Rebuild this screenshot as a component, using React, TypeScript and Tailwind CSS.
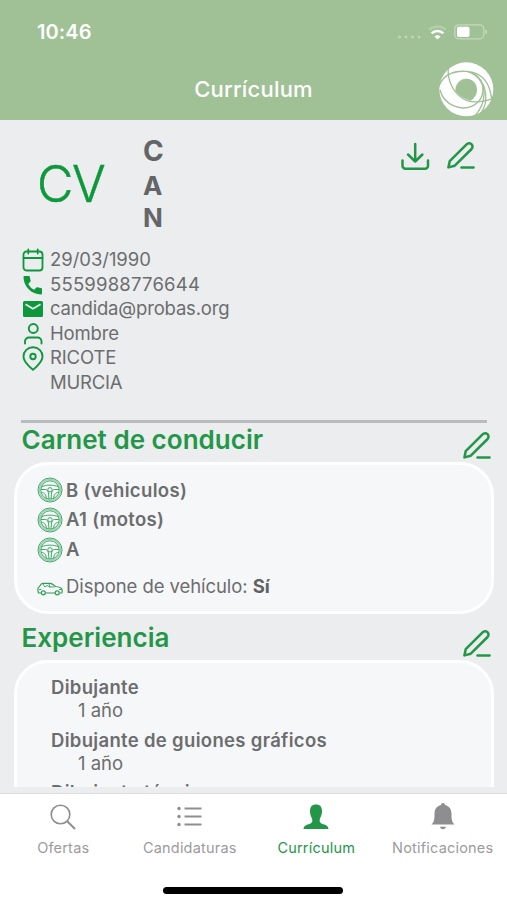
import type { ReactNode } from "react"
import clsx from "clsx"

const LICENSES = ["B (vehiculos)", "A1 (motos)", "A"]

const JOBS = [
  { title: "Dibujante", time: "1 año" },
  { title: "Dibujante de guiones gráficos", time: "1 año" },
  { title: "Dibujante técnico" },
]

function StatusBar() {
  return (
    <div className="flex h-[64px] items-center justify-between pl-[37px] pr-[19px] text-white">
      <span className="text-[20px] font-semibold tracking-[0.1px]">10:46</span>
      <div className="flex items-center">
        <svg width="25" height="6" viewBox="0 0 25 6" className="mr-[6px] mt-[10px] opacity-35" fill="currentColor">
          <circle cx="2.5" cy="3" r="1.5" />
          <circle cx="9" cy="3" r="1.5" />
          <circle cx="15.5" cy="3" r="1.5" />
          <circle cx="22" cy="3" r="1.5" />
        </svg>
        <svg width="19" height="16" viewBox="0 0 19 16" className="mr-[7px] mt-[2px]" fill="none" stroke="currentColor" strokeWidth="2.6">
          <path d="M1.2 4.8a12 12 0 0 1 16.6 0" opacity=".22" />
          <path d="M3.6 8.4a8.5 8.5 0 0 1 11.8 0" />
          <path d="M9.5 14.5 6.4 11.6a4.6 4.6 0 0 1 6.2 0z" fill="currentColor" stroke="none" />
        </svg>
        <svg width="34" height="16" viewBox="0 0 34 16" fill="none">
          <rect x=".8" y=".8" width="29" height="14" rx="4" stroke="currentColor" strokeWidth="1.2" opacity=".4" />
          <rect x="3" y="2.8" width="12.5" height="10.2" rx="1.8" fill="currentColor" />
          <path d="M31.5 5.5c2 .8 2 4 0 4.8z" fill="currentColor" opacity=".5" />
        </svg>
      </div>
    </div>
  )
}

function Logo() {
  return (
    <svg width="55" height="55" viewBox="0 0 165 165" fill="none" stroke="#9fc195" strokeWidth="4">
      <circle cx="82" cy="82" r="81" fill="white" stroke="none" />
      <path d="M81 50C101 49 114 65 114 83C114 97 106 110 94 116C72 109 56 97 49 86C49 66 62 51 81 50z" fill="#9fc195" stroke="none" />
      <path d="M28 14C24 55 42 98 84 116C108 124 138 118 162 110" />
      <path d="M0 72C14 36 48 26 82 28C128 30 154 62 158 114" />
      <path d="M84 28C142 46 152 112 106 164" />
      <path d="M98 30C148 60 150 122 124 156" />
      <path d="M3 84C16 134 72 148 104 130C128 116 136 92 130 68" />
    </svg>
  )
}

function EditIcon() {
  return (
    <svg width="30" height="30" viewBox="0 0 30 30" fill="none" stroke="currentColor" strokeWidth="2.5" strokeLinecap="round" strokeLinejoin="round">
      <path d="M2.4 26.4 3.7 20.2 20.6 3.3a3.4 3.4 0 0 1 5 4.7L8.8 24.7z" />
      <path d="M15.5 26.4h12" />
    </svg>
  )
}

function DownloadIcon() {
  return (
    <svg width="30" height="30" viewBox="0 0 30 30" fill="none" stroke="currentColor" strokeWidth="2.5" strokeLinecap="round" strokeLinejoin="round">
      <path d="M2.5 19.5v5.3a3 3 0 0 0 3 3H25a3 3 0 0 0 3-3v-5.3" />
      <path d="M15.2 3v17.5M8 13.5l7.2 7 7.2-7" />
    </svg>
  )
}

function SteeringWheel() {
  return (
    <svg width="26" height="26" viewBox="0 0 26 26" fill="none" stroke="#2f9f58" strokeWidth=".9">
      <circle cx="13" cy="13" r="12" />
      <circle cx="13" cy="13" r="10.6" strokeWidth="1.2" opacity=".45" />
      <circle cx="13" cy="13" r="9.2" />
      <circle cx="13" cy="12.8" r="2.2" />
      <path d="M4.5 9.8C9 7.6 17 7.6 21.5 9.8M4 12.5h4.5c1.6 0 2.2 1.5 3 3.5l.5 6M22 12.5h-4.5c-1.6 0-2.2 1.5-3 3.5l-.5 6" />
      <path d="M4.5 15.5c3 0 4.5 2 5 6M21.5 15.5c-3 0-4.500 2-5 6" />
    </svg>
  )
}

function CarIcon() {
  return (
    <svg width="26" height="14" viewBox="0 0 26 14" fill="none" stroke="#2f9f58" strokeWidth="1.2" strokeLinejoin="round">
      <path d="M4 11H1.5C.5 8.5.7 5.5 2 5L4.2 2.2C4.7 1.5 5.2 1.3 6 1.3h7c1.8 0 3.3 1 5.5 3.2 3 .3 5.5 1 6.3 2.5.6 1.5.4 3 0 4H22.500M8.5 11h9.5" />
      <circle cx="6.3" cy="10.8" r="2" />
      <circle cx="20.2" cy="10.8" r="2" />
      <path d="M6 2 8 5l2-1.5L12.5 5h5M12 2l1 3M2 7.5h2.5M22 7.5h2.5" strokeWidth=".9" />
    </svg>
  )
}

function InfoRow({ icon, className, children }: { icon?: ReactNode; className?: string; children: ReactNode }) {
  return (
    <div className="flex h-[24.5px] items-center">
      <div className="flex w-[28px] flex-shrink-0 text-[#0d983c]">{icon}</div>
      <span className={clsx("whitespace-nowrap", className)}>{children}</span>
    </div>
  )
}

function Section({ title, className, children }: { title: string; className?: string; children: ReactNode }) {
  return (
    <section className="mt-[1px]">
      <div className="flex h-[38px] justify-between pl-[21.5px] pr-[15px] text-[#239747]">
        <h2 className="text-[26px] font-semibold leading-[32px] tracking-[0.03px]">{title}</h2>
        <div className="mt-[7px]"><EditIcon /></div>
      </div>
      <div className={clsx("ml-[14px] mr-[13px] rounded-[34px] border-[3px] border-white bg-[#f6f7f9]", className)}>
        {children}
      </div>
    </section>
  )
}

function Tab({ label, active, children }: { label: string; active?: boolean; children: ReactNode }) {
  return (
    <div className={clsx("flex flex-1 flex-col items-center", active ? "text-[#239747]" : "text-[#8e8e91]")}>
      <div className="flex h-[45px] items-center">{children}</div>
      <span className={clsx("text-[14.5px] leading-[18px] tracking-[0.2px]", !active && "text-[#9b9b9d]")}>{label}</span>
    </div>
  )
}

export default function App() {
  return (
    <div className="flex h-[900px] w-[507px] flex-col overflow-hidden bg-[#ebedee] font-['Inter',sans-serif] text-[#6c6d6e]">
      <header className="h-[120px] flex-shrink-0 bg-[#9fc195]">
        <StatusBar />
        <div className="grid h-[51px] grid-cols-[1fr_auto_1fr] items-center px-[13px] text-white">
          <span />
          <h1 className="text-[22px] font-medium leading-[33px] tracking-[0.2px]">Currículum</h1>
          <div className="-my-[2px] justify-self-end"><Logo /></div>
        </div>
      </header>

      <main className="h-[667px] flex-shrink-0 overflow-hidden">
        {/* Name and actions */}
        <div className="flex h-[128px] pl-[37px] pr-[31px]">
          <div className="w-[106px] pt-[34px] text-[50px] font-light leading-[60px] tracking-[-1.5px] text-[#0d983c] [-webkit-text-stroke:0.5px_#0d983c]">CV</div>
          <div className="flex-1 pt-[14px] text-[26px] font-bold text-[#646566]">
            <p className="h-[34px] text-[28px] leading-[34px]">C</p>
            <p className="h-[33px] leading-[35px]">A</p>
            <p className="h-[32px] leading-[33px]">N</p>
          </div>
          <div className="flex gap-[16px] pt-[21px] text-[#239747]">
            <DownloadIcon />
            <EditIcon />
          </div>
        </div>

        {/* Personal data */}
        <div className="h-[172px] pl-[22px] text-[18.5px]">
          <InfoRow className="tracking-[-0.05px]" icon={
            <svg width="22" height="24" viewBox="0 0 22 24" fill="none" stroke="currentColor" strokeWidth="1.8" strokeLinecap="round">
              <rect x="1.5" y="3.5" width="19" height="19" rx="3" />
              <path d="M1.5 10h19M6.3 1.5v4M15.7 1.5v4" />
            </svg>
          }>29/03/1990</InfoRow>
          <InfoRow className="tracking-[0.2px]" icon={
            <svg width="22" height="22" viewBox="0 0 22 22" fill="currentColor">
              <path d="M2.5 2h4.3c.6 0 1 .3 1.1.9.1 1.3.4 2.5.8 3.6.1.4 0 .8-.3 1.1L6.3 10c1.4 2.6 3.2 4.5 5.8 5.8l2.3-2.2c.3-.3.7-.4 1.1-.3 1.2.4 2.3.6 3.6.8.6.1.9.5.9 1v4.3c0 .6-.4 1-1 1C9.5 20.4 1.5 12.5 1.5 3c0-.6.4-1 1-1z" />
            </svg>
          }>5559988776644</InfoRow>
          <InfoRow className="tracking-[-0.18px]" icon={
            <svg width="22" height="18" viewBox="0 0 22 18">
              <rect x="1" y="1" width="20" height="16" rx="1.5" fill="currentColor" />
              <path d="m3.5 4.2 7.5 4.6 7.5-4.6" fill="none" stroke="#ebedee" strokeWidth="1.8" />
            </svg>
          }>candida@probas.org</InfoRow>
          <InfoRow className="tracking-[-0.15px]" icon={
            <svg width="22" height="24" viewBox="0 0 22 24" fill="none" stroke="currentColor" strokeWidth="1.9" strokeLinecap="round">
              <circle cx="11.3" cy="6.5" r="4.5" />
              <path d="M3 21.5v-2a4 4 0 0 1 4-4h8.5a4 4 0 0 1 4 4v2" />
            </svg>
          }>Hombre</InfoRow>
          <InfoRow className="tracking-[-0.15px]" icon={
            <svg width="22" height="25" viewBox="0 0 22 25" fill="none" stroke="currentColor" strokeWidth="1.9">
              <path d="M20.5 10.5c0 6-9.5 13.3-9.5 13.3S1.5 16.5 1.5 10.5a9.5 9.3 0 0 1 19 0z" />
              <circle cx="11" cy="10.5" r="2.7" />
            </svg>
          }>RICOTE</InfoRow>
          <InfoRow className="tracking-[-0.2px]">MURCIA</InfoRow>
        </div>

        <hr className="ml-[21px] mr-[20px] h-[3px] border-0 bg-[#b9bbbc]" />

        <Section title="Carnet de conducir" className="h-[152px] pl-[19.5px] pt-[10.5px] text-[18.5px]">
          {LICENSES.map((name) => (
            <div key={name} className="flex h-[29.8px] items-center gap-[3.5px] font-semibold tracking-[0.35px]">
              <SteeringWheel />
              {name}
            </div>
          ))}
          <div className="mt-[7px] flex h-[30px] items-center gap-[3.5px]">
            <div className="mt-[4px]"><CarIcon /></div>
            <span className="tracking-[-0.07px]">Dispone de vehículo: <b className="font-bold text-[#606162]">Sí</b></span>
          </div>
        </Section>

        <div className="h-[7px]" />

        <Section title="Experiencia" className="h-[300px] pl-[34px] pt-[13px] text-[18.5px]">
          {JOBS.map((job) => (
            <div key={job.title} className="h-[52.5px]">
              <p className="h-[23px] font-semibold leading-[23px] tracking-[0.32px]">{job.title}</p>
              {job.time && <p className="h-[23px] pl-[27px] leading-[23px]">{job.time}</p>}
            </div>
          ))}
        </Section>
      </main>

      <nav className="mt-[6px] flex h-[94px] flex-shrink-0 border-t border-[#dcdddd] bg-white pr-[1px]">
        <Tab label="Ofertas">
          <svg width="26" height="26" viewBox="0 0 26 26" fill="none" stroke="currentColor" strokeWidth="1.6">
            <circle cx="10.5" cy="10.5" r="9.3" />
            <path d="m17 17 8 8" strokeWidth="2" />
          </svg>
        </Tab>
        <Tab label="Candidaturas">
          <svg width="26" height="22" viewBox="0 0 26 22" fill="currentColor">
            <circle cx="2" cy="2.5" r="1.7" />
            <circle cx="2" cy="10.5" r="1.7" />
            <circle cx="2" cy="18.5" r="1.7" />
            <path d="M7.500 1.500h17v2h-17zM7.500 9.500h17v2h-17zM7.500 17.500h17v2h-17z" />
          </svg>
        </Tab>
        <Tab label="Currículum" active>
          <svg width="26" height="26" viewBox="0 0 26 26" fill="currentColor">
            <path d="M13 .5c4.300 0 6 2.700 6 6.500 0 4.500-2 6.500-2.300 9-.2 1.800.3 3 2.300 3.800 3.500 1.200 6 1.700 6.500 5.200H.5c.5-3.500 3-4 6.500-5.200 2-.8 2.500-2 2.300-3.800C9 13.500 7 11.500 7 7 7 3.200 8.700.5 13 .5z" />
          </svg>
        </Tab>
        <Tab label="Notificaciones">
          <svg width="24" height="27" viewBox="0 0 24 27" fill="currentColor">
            <path d="M12 0c1.200 0 2 .8 2 2 4.300 1 6.500 4 6.500 9 0 6 .5 8 3 10.500H.5C3 19 3.500 17 3.500 11c0-5 2.200-8 6.500-9 0-1.200.8-2 2-2zM9 23.700h6c-.3 1.600-1.500 2.500-3 2.500s-2.700-.9-3-2.500z" />
          </svg>
        </Tab>
      </nav>

      <div className="flex h-[13px] flex-shrink-0 justify-center bg-white pr-[1px]">
        <div className="h-[7px] w-[180px] rounded-full bg-black" />
      </div>
    </div>
  )
}
